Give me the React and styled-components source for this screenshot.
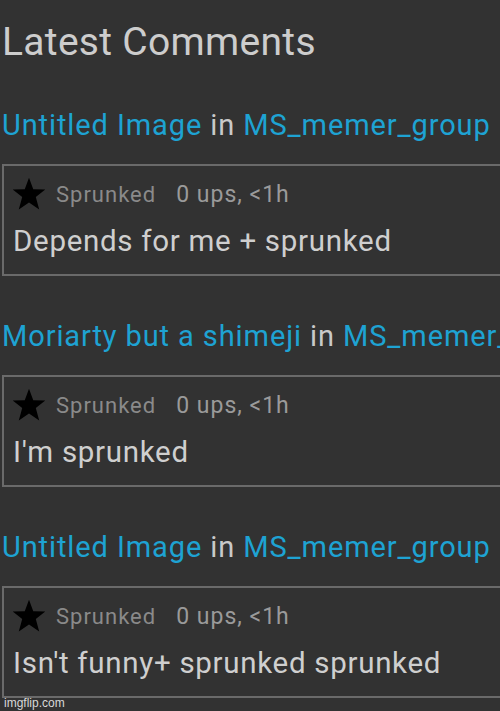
import React from "react";
import styled, { createGlobalStyle } from "styled-components";

const Global = createGlobalStyle`
  html, body {
    margin: 0;
    padding: 0;
    background: #323232;
  }
  body {
    width: 500px;
    height: 711px;
    overflow: hidden;
    font-family: Roboto, "Liberation Sans", sans-serif;
  }
`;

const Page = styled.div`
  position: relative;
  width: 500px;
  height: 711px;
  overflow: hidden;
  background: #323232;
  padding: 22px 0 0 2px;
  box-sizing: border-box;
`;

const Title = styled.h1`
  margin: 0 0 47px 0;
  font-size: 39px;
  line-height: 40px;
  font-weight: 400;
  color: #cdcdcd;
  letter-spacing: 0.3px;
  white-space: nowrap;
`;

const Item = styled.section`
  display: flex;
  flex-direction: column;
  margin-bottom: 44px;
`;

const Heading = styled.div`
  font-size: 29px;
  line-height: 32px;
  letter-spacing: 0.9px;
  color: #c9c9c9;
  white-space: nowrap;
  margin-bottom: 23px;
`;

const Link = styled.span`
  color: #1ea3d3;
`;

const Box = styled.div`
  width: 540px;
  box-sizing: border-box;
  border: 2px solid #6a6a6a;
  padding: 10px 0 16px 9px;
  display: flex;
  flex-direction: column;
`;

const Meta = styled.div`
  display: flex;
  align-items: center;
  height: 36px;
  margin-bottom: 12px;
`;

const Star = styled.svg`
  width: 34px;
  height: 34px;
  flex: none;
  margin-left: -1px;
  margin-right: 10px;
`;

const Author = styled.span`
  font-size: 22px;
  letter-spacing: 1px;
  color: #8a8a8a;
  margin-right: 20px;
`;

const Stats = styled.span`
  font-size: 23px;
  letter-spacing: 1px;
  color: #9a9a9a;
`;

const Body = styled.div`
  font-size: 29.5px;
  line-height: 34px;
  letter-spacing: 0.7px;
  color: #cfcfcf;
  white-space: nowrap;
`;

const Watermark = styled.div`
  position: absolute;
  left: 4px;
  bottom: 1px;
  font-size: 12px;
  line-height: 14px;
  color: #d8d8d8;
  font-family: "Liberation Sans", Arial, sans-serif;
`;

const StarIcon = () => (
  <Star viewBox="0 0 24 24">
    <polygon
      points="12,0.5 15,8.6 23.5,8.9 16.8,14.2 19.2,23 12,18 4.8,23 7.2,14.2 0.5,8.9 9,8.6"
      fill="#000"
    />
  </Star>
);

const comments = [
  { title: "Untitled Image", group: "MS_memer_group", text: "Depends for me + sprunked" },
  { title: "Moriarty but a shimeji", group: "MS_memer_group", text: "I'm sprunked" },
  { title: "Untitled Image", group: "MS_memer_group", text: "Isn't funny+ sprunked sprunked" },
];

export default function App() {
  return (
    <>
      <Global />
      <Page>
        <Title>Latest Comments</Title>
        {comments.map((c, i) => (
          <Item key={i}>
            <Heading>
              <Link>{c.title}</Link> in <Link>{c.group}</Link>
            </Heading>
            <Box>
              <Meta>
                <StarIcon />
                <Author>Sprunked</Author>
                <Stats>0 ups, &lt;1h</Stats>
              </Meta>
              <Body>{c.text}</Body>
            </Box>
          </Item>
        ))}
        <Watermark>imgflip.com</Watermark>
      </Page>
    </>
  );
}
